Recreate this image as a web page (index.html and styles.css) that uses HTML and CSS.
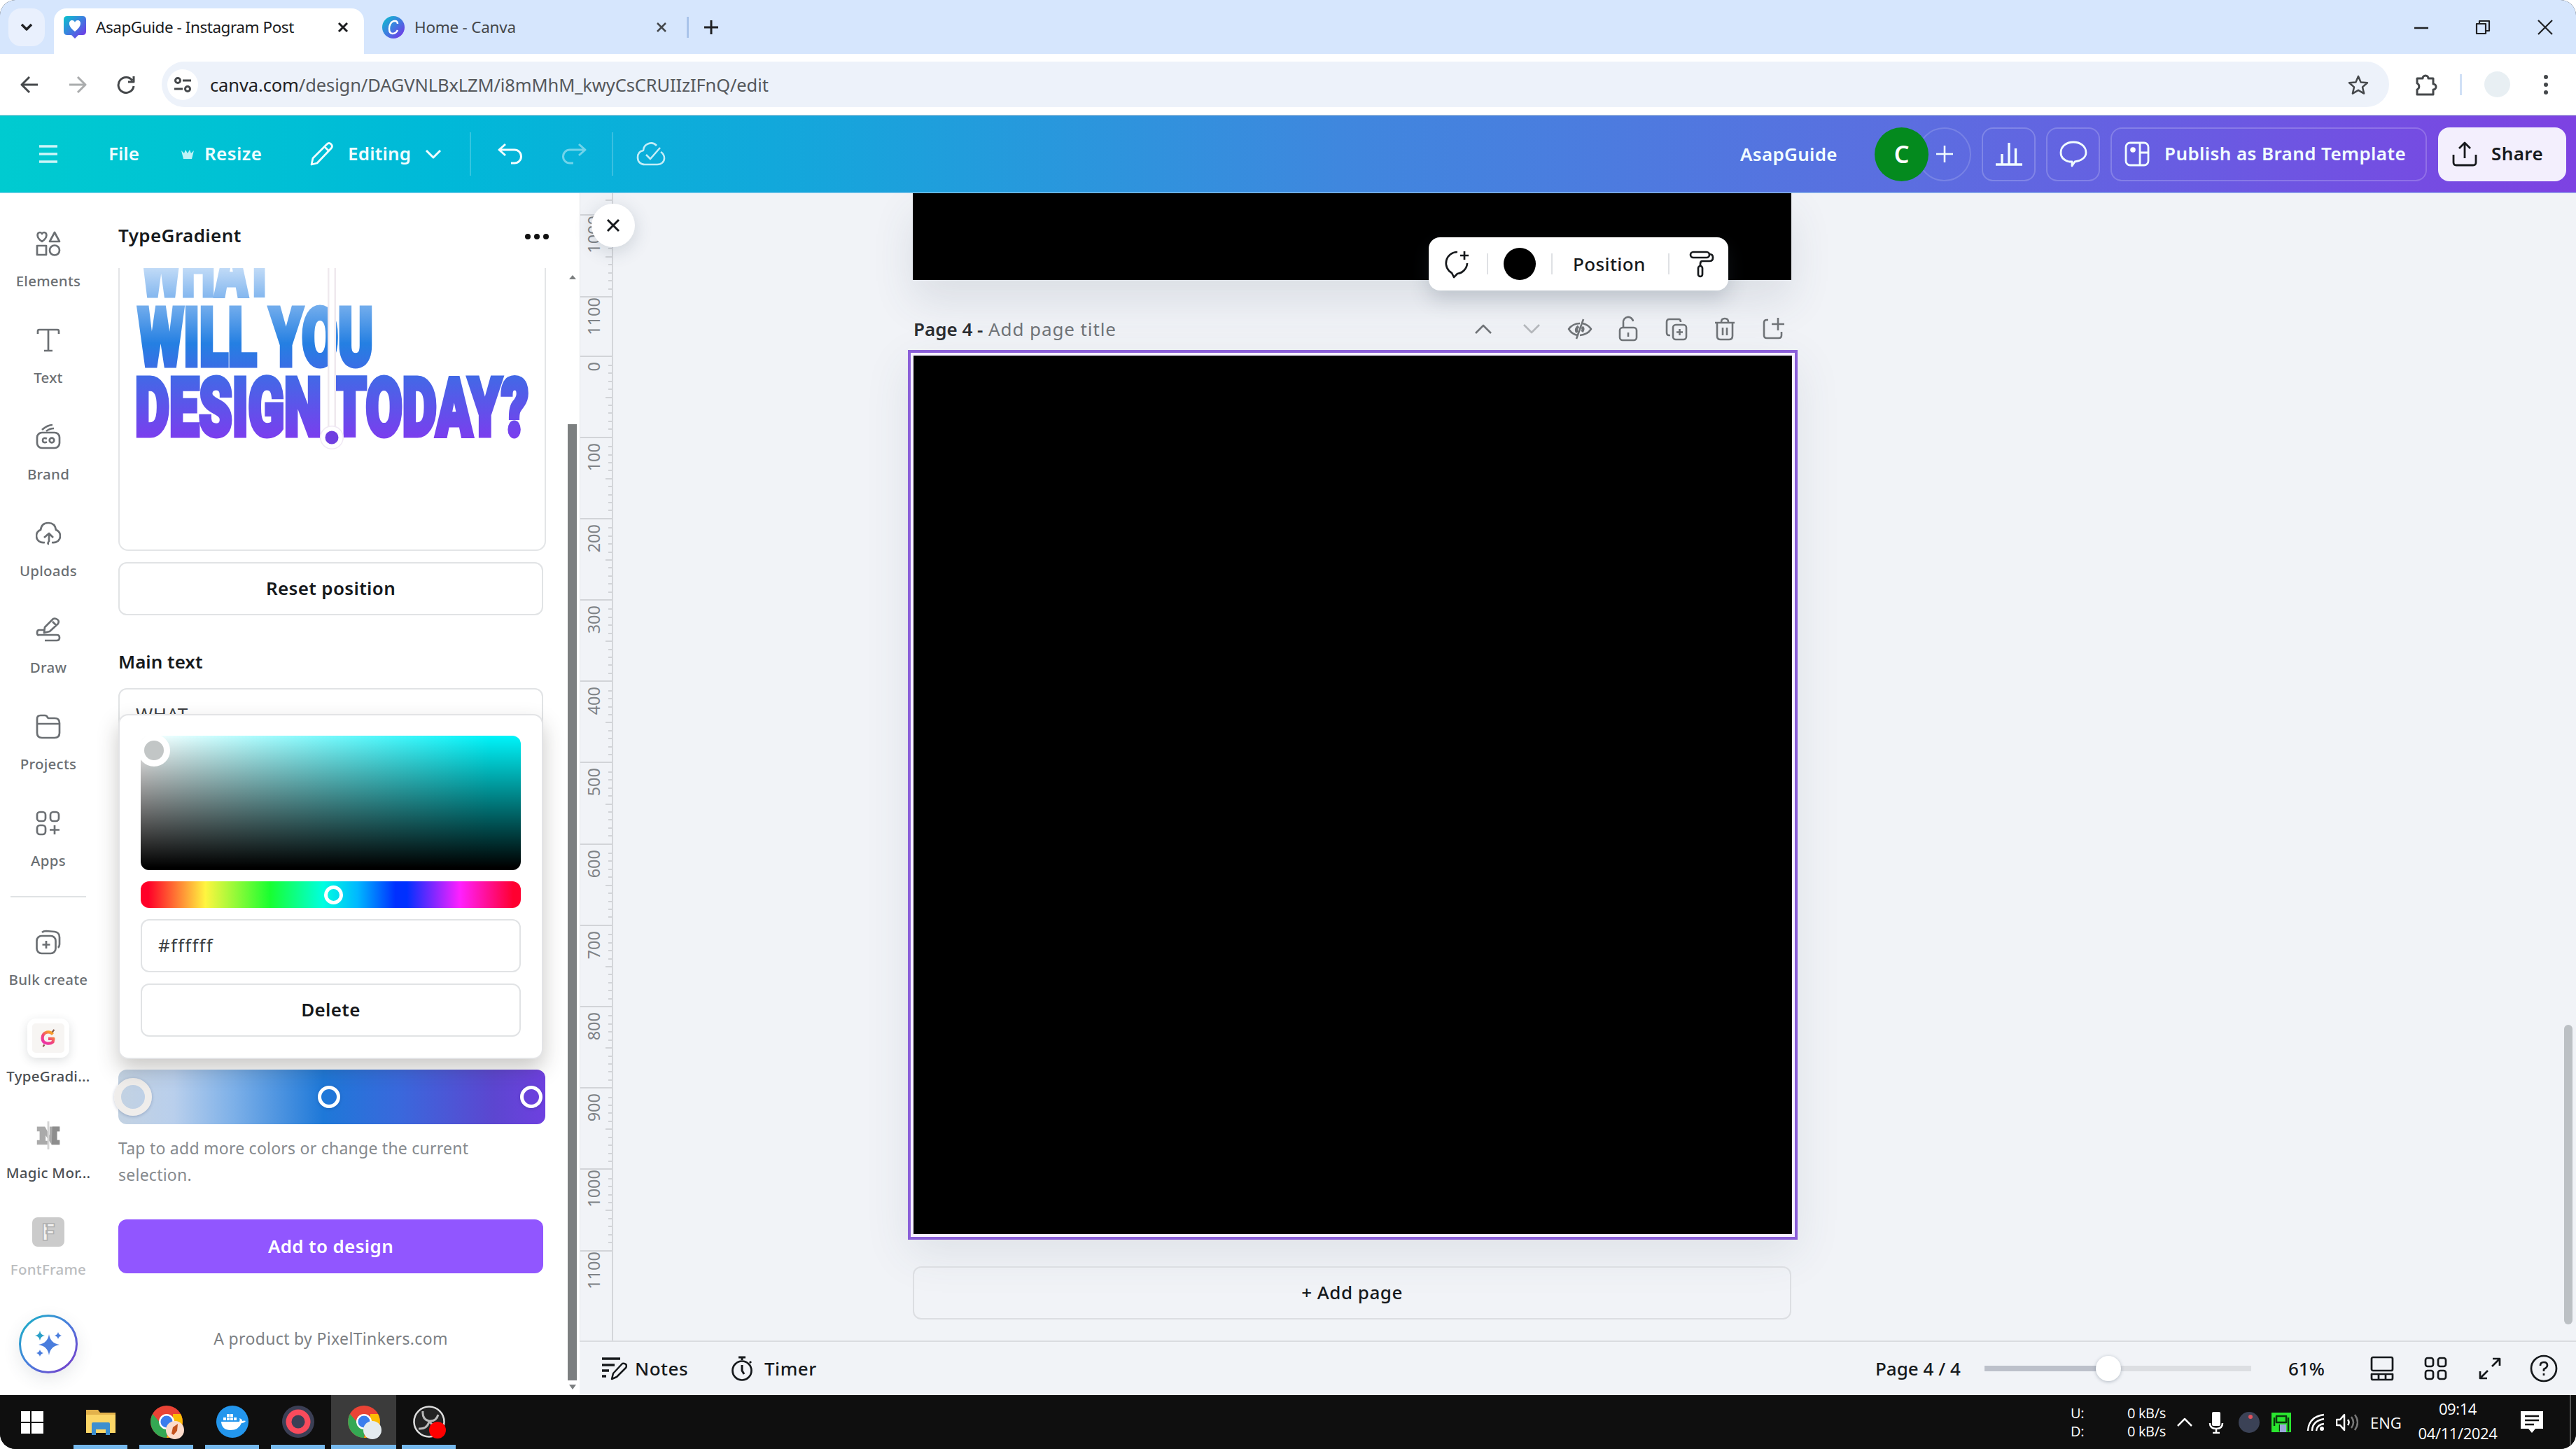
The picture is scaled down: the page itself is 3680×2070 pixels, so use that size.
FILE: index.html
```html
<!DOCTYPE html>
<html lang="en">
<head>
  <meta charset="UTF-8" />
  <title>AsapGuide - Instagram Post</title>
  <link rel="stylesheet" href="styles.css">
</head>
<body>
<div class="tabs">
  <div class="tab-search"><svg width="18" height="12" viewBox="0 0 18 12"><path d="M2 2l7 7 7-7" stroke-width="3.5"/></svg></div>
  <div class="tab active">
    <svg width="32" height="34" viewBox="0 0 32 34" class="fill"><defs><linearGradient id="cv" x1="0" y1="0" x2="1" y2="1"><stop offset="0" stop-color="#08c4cc"/><stop offset=".5" stop-color="#3f7be0"/><stop offset="1" stop-color="#7d2ae8"/></linearGradient></defs><path fill="url(#cv)" d="M5 1h22q5 0 5 5v17q0 5-5 5h-6l-5 5-5-5H5q-5 0-5-5V6q0-5 5-5z"/><path fill="#fff" d="M16 23C5 15 7 7 12 7q3 0 4 3 1-3 4-3c5 0 7 8-4 16z"/></svg>
    <span class="tab-title">AsapGuide - Instagram Post</span>
    <svg width="16" height="16" viewBox="0 0 16 16"><path d="M2 2l12 12M14 2L2 14" stroke-width="3"/></svg>
  </div>
  <div class="tab">
    <svg width="32" height="32" viewBox="0 0 32 32" class="fill"><circle cx="16" cy="16" r="16" fill="url(#cv)"/><path d="M22 11q0-4-4-4c-6 0-8 7-8 11 0 5 2 7 5 7 4 0 6-3 7-5" fill="none" stroke="#fff" stroke-width="2.5"/></svg>
    <span class="tab-title">Home - Canva</span>
    <svg width="16" height="16" viewBox="0 0 16 16"><path d="M2 2l12 12M14 2L2 14" stroke-width="2.5"/></svg>
  </div>
  <span class="tab-sep"></span>
  <svg width="20" height="20" viewBox="0 0 20 20"><path d="M10 0v20M0 10h20" stroke-width="3"/></svg>
  <div class="window-buttons">
    <svg width="20" height="20" viewBox="0 0 20 20"><path d="M0 11h20" stroke-width="2.5"/></svg>
    <svg width="22" height="22" viewBox="0 0 22 22"><path d="M2 6h13v14H2zM6 6V2h14v14h-5" stroke-width="2.2"/></svg>
    <svg width="22" height="22" viewBox="0 0 22 22"><path d="M1 1l20 20M21 1L1 21" stroke-width="2.2"/></svg>
  </div>
</div>

<div class="toolbar">
  <svg width="26" height="26" viewBox="0 0 26 26"><path d="M25 13H3M13 2L2 13l11 11" stroke-width="3"/></svg>
  <svg width="26" height="26" viewBox="0 0 26 26" class="dim"><path d="M1 13h22M13 2l11 11-11 11" stroke-width="3"/></svg>
  <svg width="26" height="26" viewBox="0 0 26 26"><path d="M22 7a11 11 0 1 0 2 8M24 1v8h-8" stroke-width="3"/></svg>
  <div class="omnibox">
    <div class="tune"><svg width="26" height="24" viewBox="0 0 26 24"><circle cx="6" cy="6" r="3.5" stroke-width="3"/><circle cx="20" cy="18" r="3.5" stroke-width="3"/><path d="M13 6h12M1 18h12" stroke-width="3"/></svg></div>
    <span class="url">canva.com<i>/design/DAGVNLBxLZM/i8mMhM_kwyCsCRUIIzIFnQ/edit</i></span>
    <svg width="30" height="30" viewBox="0 0 30 30"><path d="M15 3l3.6 8.400 9.400.8-7 6.200 2.100 9.200L15 22.800l-8.100 4.800L9 18.400l-7-6.200 9.400-.8z" stroke-width="2.5"/></svg>
  </div>
  <svg width="34" height="34" viewBox="0 0 34 34" class="puzzle"><path d="M4 8h8a4 4 0 0 1 8 0h7v8a4 4 0 0 1 0 8v7H4v-7a5 5 0 0 0 0-9z" stroke-width="3"/></svg>
  <span class="bar-sep"></span>
  <span class="avatar"></span>
  <svg width="8" height="30" viewBox="0 0 8 30" class="fill"><g fill="#45484b"><circle cx="4" cy="4" r="3"/><circle cx="4" cy="15" r="3"/><circle cx="4" cy="26" r="3"/></g></svg>
</div>

<header class="header">
  <svg class="burger" width="28" height="28" viewBox="0 0 28 28"><path d="M1 3h26M1 14h26M1 25h26" stroke-width="3.5"/></svg>
  <span class="h-file">File</span>
  <svg class="fill" width="18" height="18" viewBox="0 0 18 18"><path fill="#bff3f6" d="M0 4l4 4 2-5 3 5V1v7l3-5 2 5 4-4-3 12H3z"/></svg>
  <span class="h-resize">Resize</span>
  <svg width="36" height="36" viewBox="0 0 36 36"><path d="M3 33l2-9L25 4q3-3 6 0t0 6L11 31zM22 8l6 6" stroke-width="2.8"/></svg>
  <span class="h-editing">Editing</span>
  <svg width="24" height="14" viewBox="0 0 24 14"><path d="M2 2l10 10L22 2" stroke-width="3"/></svg>
  <span class="h-sep"></span>
  <svg width="38" height="32" viewBox="0 0 38 32"><path d="M11 2L2 10l9 8M2 10h22a9.500 9.500 0 0 1 0 19h-5" stroke-width="3"/></svg>
  <svg class="redo" width="38" height="32" viewBox="0 0 38 32"><path d="M27 2l9 8-9 8M36 10H14a9.500 9.500 0 0 0 0 19h5" stroke-width="3"/></svg>
  <span class="h-sep h-sep2"></span>
  <svg class="cloud" width="42" height="36" viewBox="0 0 42 36"><path d="M29 6A11 11 0 0 0 10 13C4 14 2 18 2 23c0 6 4 10 10 10h18c6 0 10-4 10-9 0-4-2-7-5-9M14 19l6 6L34 9" stroke-width="2.6"/></svg>
  <div class="header-right">
    <span class="h-name">AsapGuide</span>
    <span class="user">C</span>
    <span class="user-add"><svg width="24" height="24" viewBox="0 0 24 24"><path d="M12 0v24M0 12h24" stroke-width="2.600"/></svg></span>
    <span class="h-btn"><svg width="40" height="36" viewBox="0 0 40 36"><path d="M1 33h38M10 32V18M20 32V2M29.500 32V10" stroke-width="3.400"/></svg></span>
    <span class="h-btn"><svg width="40" height="38" viewBox="0 0 40 38"><path d="M14 30C6 28 2 23 2 17 2 8 10 2 20 2s18 6 18 15c0 7-7 12-16 13l-4 6v-6z" stroke-width="2.8"/></svg></span>
    <span class="h-btn publish"><svg width="36" height="36" viewBox="0 0 36 36"><rect x="2" y="2" width="32" height="32" rx="6" stroke-width="2.8"/><path d="M22 2v32M22 16h12" stroke-width="2.8"/><circle cx="12" cy="12" r="3.800" fill="#fff" stroke="none"/></svg><b>Publish as Brand Template</b></span>
    <span class="h-btn share"><svg width="36" height="36" viewBox="0 0 36 36"><path d="M18 24V3M10 10l8-8 8 8M2 19v11q0 4 4 4h24q4 0 4-4V19" stroke-width="2.8"/></svg><b>Share</b></span>
  </div>
</header>

<main class="main">
  <nav class="rail">
    <div class="rail-item"><svg viewBox="0 0 36 36"><path d="M9 15C0 9 2 2 6 2q2 0 3 2 1-2 3-2c4 0 6 7-3 13zM27 2l7 13H20zM2 21h13v13H2z"/><circle cx="27" cy="27.500" r="7"/></svg><span>Elements</span></div>
    <div class="rail-item"><svg viewBox="0 0 36 36"><path d="M3 9V5q0-2 2-2h26q2 0 2 2v4M18 3v30M12 33h12"/></svg><span>Text</span></div>
    <div class="rail-item"><svg viewBox="0 0 36 36"><path d="M9 8q8-7 15-7M15 10q5-4 11-4"/><rect x="2" y="12" width="32" height="22" rx="7"/><path d="M16 20.500q-6-2-6 2.500t6 2.500"/><circle cx="23" cy="23" r="3.300"/></svg><span>Brand</span></div>
    <div class="rail-item"><svg viewBox="0 0 36 36"><path d="M13 31c-8 1-12-4-12-9s3-8 6-9C8 6 12 3 18 3s10 3 11 10c3 1 6 4 6 9s-4 10-12 9M19 33q-3 0 0-4V18M12 24l7-6 6 6"/></svg><span>Uploads</span></div>
    <div class="rail-item"><svg viewBox="0 0 36 36"><path d="M12 22l1-8L25 2q3-1 6 1t1 6L20 20zM24 6l5 5M13 18H5q-3 0-3 4t3 3h25q4 0 4 4t-4 4H13"/></svg><span>Draw</span></div>
    <div class="rail-item"><svg viewBox="0 0 36 36"><path d="M2 14V7q0-5 5-5h6q3 0 4 3l1 1h9q7 0 7 7v14q0 7-7 7H9q-7 0-7-7zh32"/></svg><span>Projects</span></div>
    <div class="rail-item"><svg viewBox="0 0 36 36"><rect x="2" y="2" width="12" height="13" rx="4"/><rect x="21" y="2" width="12" height="13" rx="4"/><rect x="2" y="21" width="12" height="13" rx="4"/><path d="M27 21v13M20 27.500h14"/></svg><span>Apps</span></div>
    <div class="rail-line"></div>
    <div class="rail-item"><svg viewBox="0 0 36 36"><rect x="1.500" y="9" width="27" height="25" rx="7"/><path d="M15 16v11M9.500 21.500h11M9 4q2-2 6-2l12 1q7 1 7 8v10q0 3-2 5"/></svg><span>Bulk create</span></div>
    <div class="rail-item dark"><div class="app-tile"><svg viewBox="0 0 30 30" class="fill"><defs><linearGradient id="gg" x1="0" y1="1" x2=".7" y2="0"><stop offset="0" stop-color="#ec2fb4"/><stop offset=".5" stop-color="#f0457a"/><stop offset="1" stop-color="#f9a32a"/></linearGradient></defs><path d="M22 9q-4-4-9-3-7 2-7 9t7 8q5 1 9-2l1-5h-8" fill="none" stroke="url(#gg)" stroke-width="4.500"/><path d="M21 6l3-4M9 25l-2 3" stroke="#8a5a4a" stroke-width="2.500"/></svg></div><span>TypeGradi...</span></div>
    <div class="rail-item dark"><svg viewBox="0 0 36 44" class="fill magic"><path d="M1 9h12l7 13V9h15v7h-4v13h4v7H23L14 22v8h3v6H1v-7h4V16H1z" fill="#aaa"/><path d="M24 9h11v7h-4v13h4v7H23z" fill="#8d8d8d"/><path d="M18 1v42" stroke="#d4d4d4" stroke-width="3"/></svg><span>Magic Mor...</span></div>
    <div class="rail-item faded"><div class="font-tile">F</div><span>FontFrame</span></div>
    <div class="magic-button"><svg width="84" height="84" viewBox="0 0 84 84" class="fill"><defs><linearGradient id="mb" x1="0" y1="0" x2="1" y2="1"><stop offset="0" stop-color="#17b5c4"/><stop offset=".5" stop-color="#4a7ddd"/><stop offset="1" stop-color="#7b35c8"/></linearGradient></defs><circle cx="42" cy="42" r="40.500" fill="#fff" stroke="url(#mb)" stroke-width="3"/><path fill="#4a7ddd" d="M43 28q2 13 15 15-13 2-15 15-2-13-15-15 13-2 15-15z"/><path fill="#2ba0c8" d="M30 23q1 6 7 7-6 1-7 7-1-6-7-7 6-1 7-7z"/><path fill="#4a7ddd" d="M56 25q1 4 5 5-4 1-5 5-1-4-5-5 4-1 5-5zM30 50q1 4 5 5-4 1-5 5-1-4-5-5 4-1 5-5z"/></svg></div>
  </nav>

  <section class="panel">
    <div class="panel-head"><h2>TypeGradient</h2><svg class="fill" width="36" height="10" viewBox="0 0 36 10"><g fill="#111"><circle cx="5" cy="5" r="4"/><circle cx="18" cy="5" r="4"/><circle cx="31" cy="5" r="4"/></g></svg></div>
    <div class="panel-body">
      <div class="panel-content">
        <div class="preview">
          <svg class="fill" width="608" height="402" viewBox="171 383 608 402">
            <defs><linearGradient id="tg" gradientUnits="userSpaceOnUse" x1="0" y1="340" x2="0" y2="625"><stop offset="0" stop-color="#fff"/><stop offset=".53" stop-color="#247fe2"/><stop offset="1" stop-color="#7a3eee"/></linearGradient></defs>
            <g class="poster" fill="url(#tg)" stroke="url(#tg)">
              <text x="201" y="422" textLength="191" lengthAdjust="spacingAndGlyphs">WHAT</text>
              <text x="197" y="522" textLength="336" lengthAdjust="spacingAndGlyphs">WILL YOU</text>
              <text x="193" y="622" textLength="562" lengthAdjust="spacingAndGlyphs">DESIGN TODAY?</text>
            </g>
            <path d="M474 380v240" stroke="#efe9ee" stroke-width="12"/>
            <path d="M474 380v240" stroke="#fff" stroke-width="7"/>
            <circle cx="474" cy="625" r="17" fill="#f0e8f4"/><circle cx="474" cy="625" r="15.500" fill="#fff"/><circle cx="474" cy="625" r="9.500" fill="#6f3fe0"/>
          </svg>
        </div>
        <button class="btn">Reset position</button>
        <h3>Main text</h3>
        <div class="text-input">WHAT</div>
        <div class="gradient-bar"><i class="stop big"></i><i class="stop"></i><i class="stop"></i></div>
        <p class="hint">Tap to add more colors or change the current<br>selection.</p>
        <button class="btn primary">Add to design</button>
        <p class="credit">A product by PixelTinkers.com</p>
        <div class="color-popover">
          <div class="shade"><i class="knob"></i></div>
          <div class="hue"><i class="knob small"></i></div>
          <div class="hex">#ffffff</div>
          <button class="btn">Delete</button>
        </div>
      </div>
      <div class="panel-scroll"><i class="up"></i><i class="thumb"></i><i class="down"></i></div>
    </div>
  </section>

  <section class="editor">
    <div class="workspace">
      <div class="ruler" id="ruler"></div>
      <div class="canvas">
        <div class="page prev"></div>
        <div class="page-head">
          <span class="page-title"><b>Page 4 -</b> Add page title</span>
          <div class="page-tools">
            <svg viewBox="0 0 40 40"><path d="M9 26l11-11 11 11"/></svg>
            <svg viewBox="0 0 40 40" class="dim"><path d="M9 14l11 11 11-11"/></svg>
            <svg viewBox="0 0 40 40"><path d="M17 29Q9 28 4 20q6-8 16-8M24 12q8 2 12 8-5 8-16 9"/><path d="M25 6L15 34"/><path d="M16 25q-3-5 2-9M23 24q3-4 0-7" stroke-width="4"/></svg>
            <svg viewBox="0 0 40 40"><rect x="8" y="18" width="24" height="18" rx="4"/><path d="M13 18v-7a7 7 0 0 1 14-2M20 25v6"/></svg>
            <svg viewBox="0 0 40 40"><rect x="15" y="14" width="19" height="21" rx="4"/><path d="M11 29H9q-3 0-3-4V10q0-4 4-4h13q3 0 3 4M24.500 20v9M20 24.500h9"/></svg>
            <svg viewBox="0 0 40 40"><path d="M6 11h28M15 10q0-5 5-5t5 5M9 12v18q0 5 5 5h12q5 0 5-5V12M17 18v11M23 18v11"/></svg>
            <svg viewBox="0 0 40 40"><path d="M13 7h-2q-4 0-4 4v18q0 4 4 4h17q4 0 4-4v-5M27 4v18M18 13h18"/></svg>
          </div>
        </div>
        <div class="selected"><div class="page"></div></div>
        <div class="add-page">+ Add page</div>
        <div class="float-bar">
          <svg width="44" height="42" viewBox="0 0 44 42"><path d="M24 4a16 16 0 0 0-8 30l3 6 5-5a16 16 0 0 0 14-15M34 3v12M28 9h12"/></svg>
          <i></i><span class="dot"></span><i></i><span class="pos">Position</span><i></i>
          <svg width="38" height="40" viewBox="0 0 38 40"><rect x="3" y="3" width="27" height="8" rx="4"/><path d="M30 6q5 0 5 5t-5 5H20q-3 0-3 4v4"/><rect x="14" y="23" width="6" height="15" rx="3"/></svg>
        </div>
        <div class="canvas-scroll"></div>
      </div>
      <div class="close-panel"><svg width="20" height="20" viewBox="0 0 20 20"><path d="M2 2l16 16M18 2L2 18" stroke-width="3"/></svg></div>
    </div>
    <footer class="footer">
      <svg width="36" height="34" viewBox="0 0 36 34"><path d="M0 3h26M0 12h18M0 20h10M0 28h6" stroke-width="3.500"/><path d="M14 32l2-8L29 10q3-1 5 1t0 5L21 29z" stroke-width="2.500"/></svg>
      <span class="f-notes">Notes</span>
      <svg width="32" height="36" viewBox="0 0 32 36"><circle cx="16" cy="21" r="13.500"/><path d="M16 13v8l3 5M11 2h10M16 2v4M27 8l2 2" stroke-width="3"/></svg>
      <span class="f-timer">Timer</span>
      <span class="f-page">Page 4 / 4</span>
      <div class="slider"><i></i></div>
      <span class="f-zoom">61%</span>
      <svg width="34" height="36" viewBox="0 0 34 36"><rect x="2" y="2" width="30" height="19" rx="2"/><path d="M2 26h30v6q0 2-2 2H4q-2 0-2-2zM12 26v8M22 26v8"/></svg>
      <svg width="34" height="34" viewBox="0 0 34 34"><rect x="2" y="2" width="11" height="12" rx="3"/><rect x="20" y="2" width="11" height="12" rx="3"/><rect x="2" y="20" width="11" height="12" rx="3"/><rect x="20" y="20" width="11" height="12" rx="3"/></svg>
      <svg width="34" height="34" viewBox="0 0 34 34"><path d="M20 14L31 3M21 3h10v10M14 20L3 31M3 21v10h10"/></svg>
      <svg width="40" height="40" viewBox="0 0 40 40"><circle cx="20" cy="20" r="18"/><path d="M15 16q0-5 5-5t5 4.500q0 3-5 5.500v3M20 27v3"/></svg>
    </footer>
  </section>
</main>

<div class="taskbar">
  <div class="start"><i></i><i></i><i></i><i></i></div>
  <div class="task"><svg viewBox="0 0 46 46"><path fill="#e2b24c" d="M2 6h17l3 4h22v28H2z"/><path fill="#fbd667" d="M2 13h42v26H2z"/><path fill="#3d8fd0" d="M10 26q0-2 2-2h22q2 0 2 2v16h-6V34H16v8h-6z"/></svg></div>
  <div class="task"><svg viewBox="0 0 46 46"><use href="#chrome"/><circle cx="35" cy="35" r="13" fill="#fcdccb"/><path d="M30 40l2-9 7-5-1 10-5 6z" fill="#c3521d"/></svg></div>
  <div class="task"><svg viewBox="0 0 46 46"><circle cx="23" cy="23" r="23" fill="#2396ed"/><path fill="#fff" d="M7 23h26q1-3 0-5 4 1 4 4 3-1 5 0-2 3-6 3-4 10-16 10-12 0-13-12zM10 17h4v4h-4zM15 17h4v4h-4zM20 17h4v4h-4zM25 17h4v4h-4zM15 12h4v4h-4zM20 12h4v4h-4z"/></svg></div>
  <div class="task"><svg viewBox="0 0 46 46"><circle cx="23" cy="23" r="23" fill="#3b3f55"/><circle cx="23" cy="23" r="13.500" fill="none" stroke="#fa4b5c" stroke-width="8"/></svg></div>
  <div class="task active"><svg viewBox="0 0 46 46"><g id="chrome"><circle cx="23" cy="23" r="23" fill="#ea4335"/><path fill="#34a853" d="M23 46A23 23 0 0 1 3 12l13 15 9 4z"/><path fill="#fbbc05" d="M43 12a23 23 0 0 1-20 34l9-17V12z"/><circle cx="23" cy="23" r="11" fill="#fff"/><circle cx="23" cy="23" r="8.500" fill="#3b7ded"/></g><circle cx="35" cy="35" r="13" fill="#e4ebef"/></svg></div>
  <div class="task"><svg viewBox="0 0 46 46"><circle cx="23" cy="23" r="21.500" fill="#222" stroke="#ddd" stroke-width="2.500"/><path d="M14 8q-1 12 9 14 10 1 13-9M23 23q-3 11-15 10M23 23q8 5 6 15" fill="none" stroke="#b9b9b9" stroke-width="3"/><circle cx="35" cy="35" r="12" fill="#f00"/></svg></div>
  <div class="tray">
    <div class="net"><span>U:</span><span>0 kB/s</span><span>D:</span><span>0 kB/s</span></div>
    <svg width="24" height="14" viewBox="0 0 24 14"><path d="M2 12L12 2l10 10"/></svg>
    <svg width="22" height="32" viewBox="0 0 22 32"><rect x="5" y="1" width="12" height="20" rx="2" fill="#fff" stroke="none"/><path d="M2 17q0 8 9 8t9-8M11 25v6M6 31h10"/></svg>
    <svg width="30" height="30" viewBox="0 0 30 30"><circle cx="15" cy="15" r="15" fill="#3b4256" stroke="none"/><circle cx="17" cy="7" r="3" fill="#e0525c" stroke="none"/></svg>
    <svg width="28" height="30" viewBox="0 0 28 30"><path d="M0 1h28v28H0z" fill="#2ae62f" stroke="none"/><path d="M7 6h14v9H7zM4 8v12M12 18v10M24 8v20" stroke="#0a360d"/><path d="M12 18h9v11h-9z" fill="#9aa7d8" stroke="none"/></svg>
    <svg width="26" height="26" viewBox="0 0 26 26"><path d="M2 25Q3 5 25 2M8 25Q8 11 25 8M14 25q1-9 11-10"/><circle cx="22" cy="22" r="3" fill="#fff" stroke="none"/></svg>
    <svg width="32" height="28" viewBox="0 0 32 28"><path d="M1 10h5l6-7v22l-6-7H1zM17 10q3 4 0 8"/><path d="M22 6q6 8 0 16M27 3q8 11 0 22" stroke="#777"/></svg>
    <span class="lang">ENG</span>
    <div class="clock"><span>09:14</span><span>04/11/2024</span></div>
    <svg width="32" height="34" viewBox="0 0 32 34"><path d="M0 1h32v25H21l-5 6-5-6H0z" fill="#fff" stroke="none"/><path d="M6 8h20M6 14h20M6 20h13" stroke="#111"/></svg>
    <span class="peek"></span>
  </div>
</div>

<script>
  // vertical ruler: [height, label, number of ticks]
  const segments = [[32, "", 3], [117, "1000", 10], [84.5, "1100", 0]];
  for (let i = 0; i < 11; i++) segments.push([116.2, String(i * 100), 10]);
  segments.push([129, "1100", 0]);

  const ruler = document.getElementById("ruler");
  segments.forEach(([height, label, ticks]) => {
    const seg = document.createElement("div");
    seg.className = "seg";
    seg.style.height = height + "px";
    if (label) {
      const text = document.createElement("span");
      text.className = "seg-label" + (label.length > 3 ? " long" : "");
      text.textContent = label;
      seg.appendChild(text);
    }
    const list = document.createElement("div");
    list.className = "ticks";
    for (let t = 0; t < ticks; t++) {
      const tick = document.createElement("i");
      if (t === 5) tick.className = "mid";
      list.appendChild(tick);
    }
    seg.appendChild(list);
    ruler.appendChild(seg);
  });
</script>
</body>
</html>
```
FILE: styles.css
```css
* {
  box-sizing: border-box;
}

body {
  margin: 0;
  width: 3680px;
  height: 2070px;
  overflow: hidden;
  display: flex;
  flex-direction: column;
  border-radius: 22px;
  background: #0f0f0f;
  font-family: "Noto Sans", "Open Sans", sans-serif;
  font-size: 26px;
  color: #16191c;
}

html {
  background: #fff;
}

svg {
  display: block;
  flex-shrink: 0;
  fill: none;
  stroke: currentColor;
  stroke-linejoin: round;
}

svg.fill {
  stroke: none;
}

span, b {
  white-space: nowrap;
}

h2, h3, p {
  margin: 0;
}

/* browser chrome */
.tabs {
  height: 77px;
  flex-shrink: 0;
  display: flex;
  align-items: center;
  padding-left: 12px;
  background: #d6e6fd;
  color: #202124;
  font-size: 22.5px;
}

.tab-search {
  width: 52px;
  height: 54px;
  border-radius: 18px;
  background: #e9f0fd;
  display: flex;
  align-items: center;
  justify-content: center;
}

.tab {
  width: 434px;
  height: 65px;
  margin-top: 12px;
  padding: 0 0 12px 26px;
  display: flex;
  align-items: center;
  color: #44474b;
}

.tab.active {
  width: 443px;
  margin-left: 13px;
  padding-left: 14px;
  background: #fff;
  border-radius: 18px 18px 0 0;
  color: #1b1c1e;
}

.tab-title {
  width: 345px;
  margin: 0 0 0 14px;
  letter-spacing: -0.25px;
}

.tab.active .tab-title {
  letter-spacing: -0.45px;
}

.tab-sep {
  width: 3px;
  height: 30px;
  margin: 0 22px 0 27px;
  background: #a9c3ea;
}

.window-buttons {
  margin-left: auto;
  padding-right: 33px;
  display: flex;
  align-items: center;
  gap: 67px;
}

.toolbar {
  height: 88px;
  flex-shrink: 0;
  display: flex;
  align-items: center;
  padding: 0 37px 0 29px;
  background: #fff;
  color: #45484b;
  border-bottom: 1px solid #b8c9d6;
}

.toolbar > svg + svg {
  margin-left: 43px;
}

.dim {
  opacity: 0.45;
}

.omnibox {
  width: 3182px;
  height: 65px;
  margin-left: 38px;
  padding: 0 29px 0 8px;
  border-radius: 33px;
  background: #edf2fa;
  display: flex;
  align-items: center;
  justify-content: space-between;
}

.tune {
  width: 44px;
  height: 44px;
  border-radius: 50%;
  background: #fff;
  display: flex;
  align-items: center;
  justify-content: center;
}

.url {
  flex: 1;
  margin-left: 17px;
  font-size: 25.5px;
  letter-spacing: -0.12px;
  color: #1f2123;
}

.url i {
  font-style: normal;
  color: #55585c;
}

.toolbar .puzzle {
  margin-left: 36px;
}

.bar-sep {
  width: 3px;
  height: 30px;
  margin: 0 32px 0 31px;
  background: #d0e0f6;
}

.avatar {
  width: 37px;
  height: 37px;
  margin-right: 47px;
  border-radius: 50%;
  background: #e8eff3;
}

/* editor header */
.header {
  height: 111px;
  flex-shrink: 0;
  display: flex;
  align-items: center;
  padding-left: 55px;
  background: linear-gradient(90deg, #00cbd0 0%, #00b9d8 17%, #12a8db 30%, #3f87de 52%, #5b6ee0 74%, #6a5ae2 86%, #7d42e2 100%);
  border-bottom: 1px solid #9fd0f0;
  color: #f1fdff;
  font-weight: 600;
  font-size: 26px;
}

.burger {
  opacity: 0.85;
}

.h-file {
  width: 104px;
  margin: 0 0 2px 72px;
}

.h-resize {
  width: 150px;
  margin: 0 0 2px 15px;
  letter-spacing: 0.4px;
}

.h-editing {
  width: 110px;
  margin: 0 0 2px 19px;
  letter-spacing: 0.2px;
}

.h-sep {
  width: 2px;
  height: 62px;
  margin: 0 38px 0 40px;
  background: rgba(255, 255, 255, 0.2);
}

.redo {
  margin-left: 51px;
  opacity: 0.45;
}

.h-sep2 {
  margin: 0 33px 0 36px;
}

.cloud {
  opacity: 0.8;
}

.header-right {
  margin-left: auto;
  padding-right: 14px;
  display: flex;
  align-items: center;
}

.h-name {
  width: 192px;
  letter-spacing: 0.3px;
}

.user,
.user-add {
  width: 77px;
  height: 77px;
  border-radius: 50%;
  display: flex;
  align-items: center;
  justify-content: center;
}

.user {
  background: #048a1e;
  color: #fff;
  font-size: 34px;
  z-index: 1;
}

.user-add {
  margin-left: -16px;
  border: 2px solid rgba(255, 255, 255, 0.16);
}

.h-btn {
  min-width: 77px;
  height: 77px;
  margin-left: 15px;
  border: 2px solid rgba(255, 255, 255, 0.2);
  border-radius: 16px;
  display: flex;
  align-items: center;
  justify-content: center;
}

.h-btn b {
  margin-bottom: 2px;
  font-weight: 600;
  letter-spacing: 0.4px;
}

.publish {
  width: 452px;
  padding-left: 18px;
  justify-content: flex-start;
  gap: 21px;
}

.share {
  width: 183px;
  margin-left: 16px;
  padding-left: 20px;
  justify-content: flex-start;
  gap: 20px;
  border: none;
  background: #f3effd;
  color: #16191c;
}

/* main area */
.main {
  height: 1717px;
  flex-shrink: 0;
  display: flex;
  background: #fff;
}

.rail {
  width: 138px;
  padding-top: 53px;
  display: flex;
  flex-direction: column;
  align-items: center;
  font-size: 20.5px;
  font-weight: 500;
  color: #6b6f73;
}

.rail-item {
  height: 138px;
  flex-shrink: 0;
  display: flex;
  flex-direction: column;
  align-items: center;
}

.rail-item > svg {
  width: 36px;
  height: 38px;
  stroke-width: 2.7;
}

.rail-item span {
  margin-top: 20px;
  letter-spacing: 0.25px;
}

.rail-line {
  width: 108px;
  height: 2px;
  flex-shrink: 0;
  margin: -15px 0 45px;
  background: #e0e2e4;
}

.dark {
  color: #4c5054;
}

.faded {
  color: #bbbdbf;
}

.app-tile,
.font-tile {
  width: 60px;
  height: 56px;
  margin: -10px 0 -8px;
  border-radius: 12px;
  display: flex;
  align-items: center;
  justify-content: center;
}

.app-tile {
  border: 7px solid #fff;
  background: #f7f5f3;
  box-shadow: 0 4px 14px rgba(50, 60, 70, 0.16);
}

.app-tile svg {
  width: 28px;
  height: 28px;
}

.font-tile {
  width: 46px;
  height: 42px;
  margin: -2px 0;
  border-radius: 8px;
  background: #cbcbcb;
  color: #f2f2f2;
  font: 900 33px Roboto, "Noto Sans", sans-serif;
  -webkit-text-stroke: 1.5px #b0b0b0;
}

.rail .magic {
  height: 42px;
  margin: -2px 0;
}

.magic-button {
  margin-top: -1px;
  border-radius: 50%;
  box-shadow: 0 8px 24px rgba(60, 70, 90, 0.12);
}

.panel {
  width: 690px;
  display: flex;
  flex-direction: column;
}

.panel-head {
  height: 107px;
  flex-shrink: 0;
  padding: 0 43px 0 31px;
  display: flex;
  align-items: center;
  justify-content: space-between;
}

.panel-head h2,
.panel h3 {
  font-size: 26px;
  font-weight: 600;
}

.panel-head h2 {
  margin-top: 13px;
  letter-spacing: 0.4px;
}

.panel-head svg {
  margin-top: 16px;
}

.panel-body {
  flex: 1;
  overflow: hidden;
  display: flex;
}

.panel-content {
  position: relative;
  width: 673px;
  flex-shrink: 0;
  padding-left: 31px;
}

.preview {
  width: 611px;
  height: 404px;
  overflow: hidden;
  border: 2px solid #e3e5e7;
  border-top: none;
  border-radius: 0 0 14px 14px;
}

.poster text {
  font-family: Roboto, "Liberation Sans", sans-serif;
  font-weight: 900;
  font-size: 115px;
  stroke-width: 7px;
  stroke-linejoin: miter;
}

.btn {
  display: flex;
  width: 607px;
  height: 76px;
  padding-bottom: 3px;
  align-items: center;
  justify-content: center;
  border: 2px solid #e1e3e5;
  border-radius: 12px;
  background: #fff;
  color: #16191c;
  font: 600 26px "Noto Sans", sans-serif;
  letter-spacing: 0.35px;
}

.preview + .btn {
  margin-top: 16px;
}

.panel h3 {
  height: 36px;
  line-height: 36px;
  margin: 48px 0 20px;
}

.text-input {
  width: 607px;
  height: 76px;
  padding: 17px 23px;
  border: 2px solid #e1e3e5;
  border-radius: 12px;
  color: #3b3f43;
  letter-spacing: 0.5px;
}

.gradient-bar {
  width: 610px;
  height: 78px;
  margin-top: 469px;
  padding: 0 4px 0 0;
  display: flex;
  align-items: center;
  justify-content: space-between;
  border-radius: 12px;
  background: linear-gradient(90deg, #c3d2e2 0%, #b9cfec 13%, #7db0e8 27%, #1e78d8 48%, #3a68dc 66%, #5c46d0 88%, #6e40e0 100%);
}

.stop {
  width: 32px;
  height: 32px;
  border: 5px solid #fff;
  border-radius: 50%;
  box-shadow: 0 1px 4px rgba(20, 40, 90, 0.25);
}

.stop.big {
  width: 54px;
  height: 54px;
  margin: 0 -21px 0 -6px;
  border: 10px solid #efedeb;
}

.hint {
  margin-top: 15px;
  font-size: 23px;
  line-height: 38px;
  letter-spacing: 0.24px;
  color: #868a8e;
}

.primary {
  height: 77px;
  margin-top: 45px;
  border: none;
  background: #9156ff;
  color: #fff;
}

.credit {
  width: 607px;
  margin-top: 75px;
  text-align: center;
  font-size: 23px;
  line-height: 36px;
  letter-spacing: 0.34px;
  color: #7c8084;
}

.color-popover {
  position: absolute;
  left: 31px;
  top: 637px;
  width: 607px;
  height: 493px;
  padding: 29px 30px;
  border: 2px solid #e3e4e6;
  border-radius: 14px;
  background: #fff;
  box-shadow: 0 14px 30px rgba(50, 45, 40, 0.26);
}

.shade {
  height: 192px;
  border-radius: 12px;
  background: linear-gradient(0deg, #000 2%, transparent 100%), linear-gradient(90deg, #fff, #00f4fa 92%);
}

.knob {
  display: block;
  width: 46px;
  height: 46px;
  border: 9px solid #fff;
  border-radius: 50%;
  background: #c2c6c6;
  transform: translate(-4px, -2px);
}

.hue {
  height: 38px;
  margin-top: 16px;
  display: flex;
  align-items: center;
  justify-content: center;
  border-radius: 12px;
  background: linear-gradient(90deg, #ff0028 0%, #ff0028 2%, #fff540 17%, #18ff30 34%, #00ffe0 48%, #00b8ff 57%, #0030ff 67%, #0030ff 70%, #ff20ff 84%, #ff0030 98%);
}

.knob.small {
  width: 27px;
  height: 27px;
  margin-left: 8px;
  border-width: 5px;
  background: transparent;
  transform: none;
}

.hex {
  height: 76px;
  margin-top: 16px;
  padding: 0 23px 3px;
  display: flex;
  align-items: center;
  border: 2px solid #e1e3e5;
  border-radius: 12px;
  font-size: 26px;
  letter-spacing: 1.2px;
  color: #3b3f43;
}

.color-popover .btn {
  width: 100%;
  margin-top: 16px;
}

.panel-scroll {
  width: 13px;
  padding-bottom: 7px;
  display: flex;
  flex-direction: column;
  align-items: center;
}

.panel-scroll .up,
.panel-scroll .down {
  border: 5px solid transparent;
  border-bottom: 6px solid #7c7f80;
  border-top: none;
}

.panel-scroll .up {
  margin-top: 10px;
}

.panel-scroll .down {
  border-top: 7px solid #7c7f80;
  border-bottom: none;
  margin-top: 6px;
}

.panel-scroll .thumb {
  width: 13px;
  height: 1366px;
  margin-top: 207px;
  background: #7c7f80;
}

/* canvas side */
.editor {
  flex: 1;
  display: flex;
  flex-direction: column;
  background: #f1f3f7;
}

.workspace {
  position: relative;
  height: 1641px;
  display: flex;
  border-bottom: 2px solid #dadce0;
}

.ruler {
  width: 48px;
  overflow: hidden;
  border-left: 1px solid #e2e4e8;
  border-right: 2px solid #d4d6da;
}

.seg {
  position: relative;
  display: flex;
  justify-content: space-between;
}

.seg:first-child {
  margin-top: -2px;
}

.seg + .seg {
  border-top: 2px solid #d2d4d8;
}

.seg-label {
  height: max-content;
  margin: 7px 0 0 2px;
  writing-mode: vertical-rl;
  transform: rotate(180deg);
  font-size: 23.5px;
  line-height: 34px;
  color: #7e8286;
}

.seg-label.long {
  margin-top: 0;
}

.ticks {
  height: 100%;
  margin-left: auto;
  display: flex;
  flex-direction: column;
  align-items: flex-end;
}

.ticks i {
  flex: 1;
  width: 9px;
  border-top: 2px solid #d2d4d8;
}

.ticks i:first-child {
  border-top-color: transparent;
}

.ticks i.mid {
  width: 13px;
}

.canvas {
  position: relative;
  flex: 1;
  padding-left: 421px;
  overflow: hidden;
}

.page {
  width: 1255px;
  height: 1255px;
  background: #000;
}

.page.prev {
  height: 124px;
  margin-left: 7px;
  box-shadow: 0 30px 60px rgba(57, 76, 96, 0.12);
}

.page-head {
  width: 1270px;
  height: 100px;
  padding: 50px 14px 10px 8px;
  display: flex;
  align-items: center;
  justify-content: space-between;
  color: #6f7377;
  letter-spacing: 0.9px;
}

.page-title b {
  font-weight: 600;
  letter-spacing: 0;
  color: #2a2d31;
}

.page-tools {
  display: flex;
  gap: 29px;
}

.page-tools svg {
  width: 40px;
  height: 40px;
  stroke-width: 2.6;
}

.selected {
  width: 1271px;
  height: 1271px;
  padding: 4px;
  border: 4px solid #8a5ed8;
  background: #f6f0ff;
  box-shadow: 0 20px 60px rgba(57, 76, 96, 0.1);
}

.add-page {
  width: 1255px;
  height: 76px;
  margin: 38px 0 0 7px;
  padding-bottom: 2px;
  display: flex;
  align-items: center;
  justify-content: center;
  border: 2px solid #dcdee2;
  border-radius: 12px;
  font-size: 26px;
  font-weight: 500;
  letter-spacing: 0.5px;
}

.float-bar {
  position: absolute;
  left: 1165px;
  top: 63px;
  width: 428px;
  height: 76px;
  padding: 0 18px 0 17px;
  display: flex;
  align-items: center;
  border-radius: 16px;
  background: #fff;
  box-shadow: 0 12px 28px rgba(57, 76, 96, 0.22);
  stroke-width: 2.7;
  font-size: 26px;
  font-weight: 500;
  letter-spacing: 0.4px;
}

.float-bar i {
  width: 2px;
  height: 30px;
  background: #dfe1e4;
}

.float-bar i:nth-of-type(1) {
  margin: 0 22px;
}

.float-bar .dot {
  width: 46px;
  height: 46px;
  border-radius: 50%;
  background: #000;
}

.float-bar i:nth-of-type(2) {
  margin: 0 29px 0 22px;
}

.float-bar .pos {
  width: 136px;
}

.float-bar i:nth-of-type(3) {
  margin-right: 27px;
}

.canvas-scroll {
  position: absolute;
  right: 5px;
  top: 1188px;
  width: 12px;
  height: 428px;
  border-radius: 6px;
  background: #bcc0c4;
}

.close-panel {
  position: absolute;
  left: 17px;
  top: 15px;
  width: 62px;
  height: 62px;
  border-radius: 50%;
  background: #fff;
  box-shadow: 0 6px 26px rgba(57, 76, 96, 0.2);
  display: flex;
  align-items: center;
  justify-content: center;
}

.footer {
  flex: 1;
  padding: 0 26px 0 32px;
  display: flex;
  align-items: center;
  font-size: 26px;
  font-weight: 500;
  letter-spacing: 0.5px;
  stroke-width: 2.7;
}

.f-notes {
  width: 137px;
  margin-left: 11px;
}

.f-timer {
  margin-left: 16px;
}

.f-page {
  width: 156px;
  margin-left: auto;
  letter-spacing: 0;
}

.slider {
  width: 381px;
  height: 8px;
  margin-right: 53px;
  background: linear-gradient(90deg, #bcc0ca 46%, #dcdee2 46%);
}

.slider i {
  display: block;
  width: 36px;
  height: 36px;
  margin: -14px 0 0 159px;
  border-radius: 50%;
  background: #fff;
  box-shadow: 0 1px 5px rgba(57, 76, 96, 0.35);
}

.f-zoom {
  width: 117px;
  letter-spacing: 0;
}

.footer svg:nth-last-child(-n+3) {
  margin-left: 43px;
}

.footer svg:last-child {
  margin-left: 40px;
}

/* windows taskbar */
.taskbar {
  flex: 1;
  padding-left: 30px;
  display: flex;
  align-items: center;
  background: #0f0f0f;
  color: #fff;
  font-family: "Open Sans", "Noto Sans", sans-serif;
  font-size: 22px;
}

.start {
  width: 32px;
  height: 32px;
  margin-right: 43px;
  display: grid;
  grid-template-columns: 13px 17px;
  gap: 2px;
}

.start i {
  background: #fff;
}

.task {
  width: 77px;
  height: 77px;
  margin-right: 17px;
  display: flex;
  align-items: center;
  justify-content: center;
  border-bottom: 6px solid #76b9ed;
}

.task svg {
  width: 46px;
  height: 46px;
  margin-top: 5px;
  overflow: visible;
  stroke: none;
}

.task.active {
  width: 93px;
  margin: 0 8px 0 -8px;
  background: #3b3b3b;
}

.tray {
  margin-left: auto;
  height: 100%;
  display: flex;
  align-items: center;
  stroke-width: 2.5;
}

.net {
  width: 136px;
  margin-right: 15px;
  display: grid;
  grid-template-columns: 1fr auto;
  font-size: 20px;
  line-height: 26px;
  letter-spacing: -0.3px;
}

.tray svg:nth-of-type(2) {
  margin: 0 21px 0 22px;
}

.tray svg:nth-of-type(4) {
  margin: 0 22px 0 17px;
}

.tray svg:nth-of-type(6) {
  margin-left: 16px;
}

.lang {
  width: 46px;
  margin: 0 21px 0 17px;
}

.clock {
  width: 116px;
  margin: 0 32px 3px 0;
  display: flex;
  flex-direction: column;
  align-items: center;
  line-height: 35px;
  letter-spacing: -0.4px;
}

.peek {
  width: 2px;
  height: 100%;
  margin: 0 7px 0 38px;
  background: #555;
}
```
